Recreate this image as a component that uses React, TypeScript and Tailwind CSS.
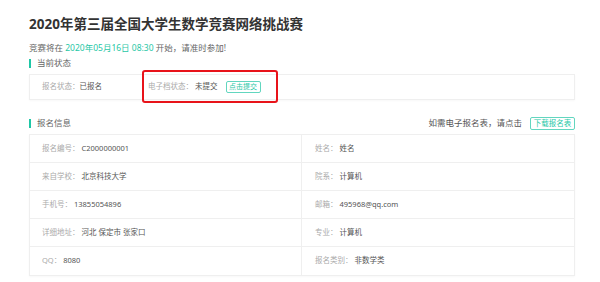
import React from 'react'

const rows: [string, string, string, string][] = [
  ['报名编号：', 'C2000000001', '姓名：', '姓名'],
  ['来自学校：', '北京科技大学', '院系：', '计算机'],
  ['手机号：', '13855054896', '邮箱：', '495968@qq.com'],
  ['详细地址：', '河北 保定市 张家口', '专业：', '计算机'],
  ['QQ：', '8080', '报名类别：', '非数学类'],
]

function SectionTitle({ children }: { children: React.ReactNode }) {
  return (
    <div className="flex items-center h-[12px]">
      <span className="w-[2px] h-[9px] bg-[#1fc7a6]" />
      <span className="ml-[6px] text-[8.5px] leading-[12px] text-[#666]">{children}</span>
    </div>
  )
}

export default function App() {
  return (
    <div className="w-[600px] h-[282px] bg-white pl-[29px] pr-[25px] pt-[14px] font-['Noto_Sans','Noto_Sans_CJK_SC',sans-serif] overflow-hidden">
      <h1 className="text-[13.5px] leading-[20px] font-bold text-[#333]">
        2020年第三届全国大学生数学竞赛网络挑战赛
      </h1>

      <p className="mt-[7px] text-[8.5px] leading-[14px] text-[#666]">
        竞赛将在 <span className="text-[#1fc7a6]">2020年05月16日 08:30</span> 开始，请准时参加!
      </p>

      {/* current status */}
      <div className="mt-[2px]">
        <SectionTitle>当前状态</SectionTitle>
      </div>
      <div className="relative mt-[5px] h-[26px] border border-[#efefef] flex items-center pl-[12px] text-[7.5px] shadow-[0_1px_2px_rgba(0,0,0,0.03)]">
        <div className="w-[106px] flex items-center">
          <span className="text-[#aaa]">报名状态：</span>
          <span className="text-[#555]">已报名</span>
        </div>
        <div className="flex items-center">
          <span className="text-[#aaa]">电子档状态：</span>
          <span className="ml-[2px] text-[#555]">未提交</span>
          <button className="ml-[8px] h-[12px] w-[35px] border border-[#62d6bf] rounded-[2px] text-[#1fc7a6] text-[7px] leading-[10px]">
            点击提交
          </button>
        </div>
        <div className="absolute left-[112px] top-[-5px] w-[136px] h-[33px] border-2 border-[#e8131a] rounded-[3px]" />
      </div>

      {/* sign-up info */}
      <div className="mt-[16px] h-[14px] flex items-center justify-between">
        <SectionTitle>报名信息</SectionTitle>
        <div className="flex items-center">
          <span className="text-[8.5px] text-[#555]">如需电子报名表，请点击</span>
          <button className="ml-[8px] h-[13px] w-[45px] border border-[#62d6bf] rounded-[2px] text-[#1fc7a6] text-[7.5px] leading-[11px]">
            下载报名表
          </button>
        </div>
      </div>

      <div className="mt-[4px] border border-[#efefef] grid grid-cols-2 text-[7.5px] shadow-[0_1px_2px_rgba(0,0,0,0.03)]">
        {rows.map(([l1, v1, l2, v2], i) => (
          <React.Fragment key={i}>
            <div
              className={`h-[28px] flex items-center pl-[12px] border-r border-[#efefef] ${
                i < rows.length - 1 ? 'border-b' : ''
              }`}
            >
              <span className="text-[#aaa]">{l1}</span>
              <span className="ml-[2px] text-[#555]">{v1}</span>
            </div>
            <div
              className={`h-[28px] flex items-center pl-[13px] border-[#efefef] ${
                i < rows.length - 1 ? 'border-b' : ''
              }`}
            >
              <span className="text-[#aaa]">{l2}</span>
              <span className="ml-[2px] text-[#555]">{v2}</span>
            </div>
          </React.Fragment>
        ))}
      </div>
    </div>
  )
}
